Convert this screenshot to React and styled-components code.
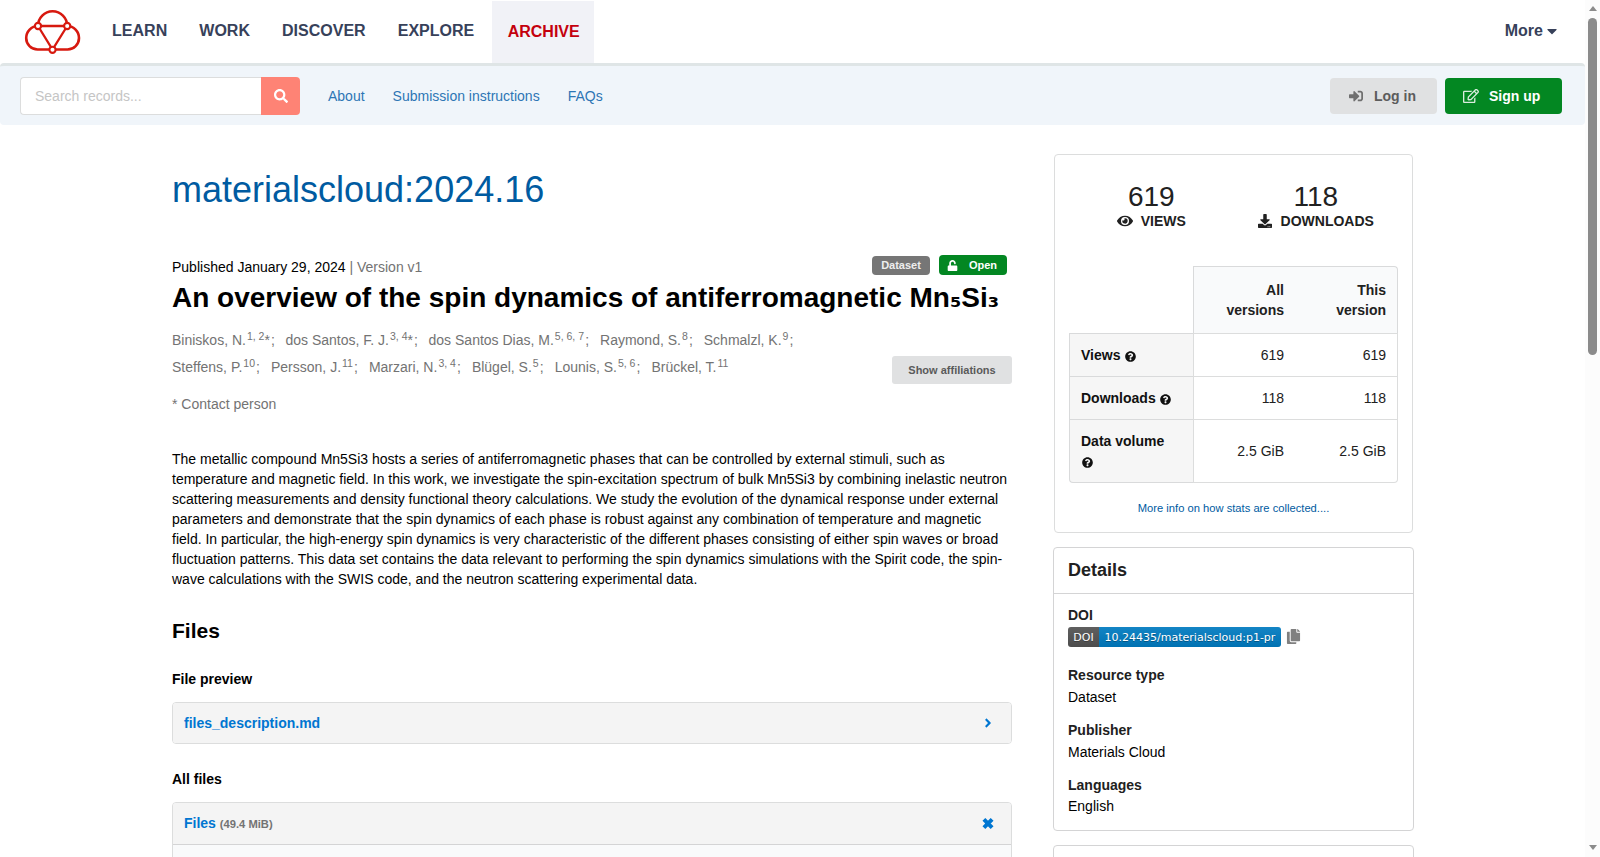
import React from "react";
import styled, { createGlobalStyle } from "styled-components";
import {
  FaSearch, FaCaretDown, FaSignInAlt, FaRegEdit, FaUnlock, FaEye,
  FaDownload, FaQuestionCircle, FaAngleRight, FaCopy,
} from "react-icons/fa";

const GlobalStyle = createGlobalStyle`
  * { box-sizing: border-box; }
  body {
    margin: 0;
    overflow: hidden;
    background: #fff;
    color: #000;
    font: 14px/20px "Liberation Sans", Arial, sans-serif;
  }
  h1, h2, h3, p, dl, dd, dt { margin: 0; }
  a { text-decoration: none; }
  svg { display: block; flex: none; }
`;

const Window = styled.div`
  display: flex;
  height: 857px;
  overflow: hidden;
`;
const Page = styled.div`
  width: 1585px;
  height: 857px;
  overflow: hidden;
`;

const TopNav = styled.nav`
  display: flex;
  align-items: stretch;
  height: 63px;
  padding: 1px 25px 0 24px;
`;
const LogoLink = styled.a`
  width: 72px;
  padding-top: 8px;
`;
const NavItem = styled.a`
  display: flex;
  align-items: center;
  padding: ${(p) => (p.$active ? "0 14.5px 0 15.5px" : "0 16px 2px")};
  margin-left: ${(p) => (p.$active ? "2px" : "0.1px")};
  font-size: 16px;
  font-weight: bold;
  color: ${(p) => (p.$active ? "#c4000d" : "#37415a")};
  background: ${(p) => (p.$active ? "#f1f2f7" : "transparent")};
`;
const MoreItem = styled.a`
  display: flex;
  align-items: center;
  gap: 1px;
  padding-bottom: 2px;
  margin-left: auto;
  font-size: 16px;
  font-weight: bold;
  color: #37415a;
`;

const SubNav = styled.div`
  display: flex;
  align-items: center;
  height: 62px;
  padding: 4px 23px 3px 20px;
  border-top: 3px solid #dfe5e6;
  border-radius: 4px;
  background: #f0f5fa;
`;
const SearchForm = styled.div`
  display: flex;
  width: 280px;
  height: 38px;
  margin-right: 28px;
`;
const SearchInput = styled.div`
  flex: 1;
  padding: 8px 14px;
  border: 1px solid #dcdddd;
  border-right: 0;
  border-radius: 4px 0 0 4px;
  background: #fff;
  color: #c5c5c5;
`;
const SearchButton = styled.button`
  display: flex;
  align-items: center;
  justify-content: center;
  width: 39px;
  padding: 0;
  border: 0;
  border-radius: 0 4px 4px 0;
  background: #fe8375;
  color: #fff;
`;
const SubLink = styled.a`
  margin-right: 28px;
  color: #2d76b5;
`;
const Actions = styled.div`
  display: flex;
  gap: 8px;
  margin-left: auto;
`;
const ActionButton = styled.button`
  display: flex;
  align-items: center;
  gap: ${(p) => (p.$primary ? "10px" : "11px")};
  width: ${(p) => (p.$primary ? 117 : 107)}px;
  height: 36px;
  padding: 0 0 0 ${(p) => (p.$primary ? 18 : 19)}px;
  border: 0;
  border-radius: 4px;
  background: ${(p) => (p.$primary ? "#038722" : "#e0e1e2")};
  color: ${(p) => (p.$primary ? "#fff" : "#5c5c5c")};
  font: bold 14px "Liberation Sans", Arial, sans-serif;
  svg { opacity: 0.85; }
`;

const Main = styled.main`
  display: flex;
  align-items: flex-start;
  padding: 29px 0 0 172px;
`;
const Record = styled.article`
  width: 840px;
  padding-top: 15px;
`;
const Community = styled.div`
  font-size: 36px;
  line-height: 41px;
  color: #005ba1;
`;
const MetaRow = styled.div`
  display: flex;
  justify-content: space-between;
  height: 20px;
  margin-top: 47px;
`;
const Muted = styled.span`
  color: #737373;
`;
const Labels = styled.div`
  display: flex;
  align-items: center;
  gap: 9px;
  height: 20px;
  margin: -2px 5px 0 0;
`;
const Label = styled.span`
  display: flex;
  align-items: center;
  gap: 10.5px;
  height: ${(p) => (p.$open ? 20 : 19)}px;
  padding: 0 ${(p) => (p.$open ? 10 : 9)}px 0 ${(p) => (p.$open ? 8.5 : 9)}px;
  border-radius: 4px;
  background: ${(p) => (p.$open ? "#038722" : "#767676")};
  color: ${(p) => (p.$open ? "#fff" : "#eeeeee")};
  font-size: 11px;
  font-weight: bold;
`;
const RecordTitle = styled.h1`
  margin-top: 3px;
  font-size: 28px;
  height: 36px;
  line-height: 36px;
  white-space: nowrap;
`;
const Subscript = styled.span`
  font-family: "DejaVu Sans", sans-serif;
  font-size: 26px;
  line-height: 0;
`;
const Creators = styled.div`
  display: flex;
  justify-content: space-between;
  align-items: flex-end;
  height: 60px;
  margin-top: 8px;
`;
const CreatorList = styled.div`
  align-self: flex-start;
  padding-top: 3px;
  color: #737373;
`;
const CreatorRow = styled.div`
  display: flex;
  gap: 11px;
  line-height: 27px;
  white-space: nowrap;
`;
const Creator = styled.span`
  margin-right: ${(p) => (p.$contact ? "-0.3px" : "0")};
`;
const Sup = styled.sup`
  position: relative;
  top: -0.5em;
  margin-left: 1px;
  margin-right: ${(p) => (p.$contact ? "0" : "1.1px")};
  font-size: 75%;
  line-height: 0;
  vertical-align: baseline;
`;
const Star = styled.span`
  margin-right: 1px;
`;
const AffiliationsButton = styled.button`
  width: 120px;
  height: 28px;
  padding: 0;
  border: 0;
  border-radius: 3px;
  background: #e0e1e2;
  color: #5a5a5a;
  font: bold 11px "Liberation Sans", Arial, sans-serif;
`;
const Contact = styled.p`
  margin-top: 10px;
  color: #737373;
`;
const Abstract = styled.p`
  margin-top: 35px;
  white-space: nowrap;
`;
const FilesHeading = styled.h2`
  margin-top: 28px;
  font-size: 21px;
  line-height: 28px;
`;
const SubHeading = styled.h3`
  margin-top: ${(p) => p.$top}px;
  font-size: 14px;
  line-height: 20px;
`;
const FilePanel = styled.div`
  margin-top: 13px;
  height: ${(p) => (p.$open ? "120px" : "42px")};
  border: 1px solid #dcdddd;
  border-radius: 4px;
  background: ${(p) => (p.$open ? "#f9fafb" : "#f4f4f4")};
  overflow: hidden;
`;
const PanelTitle = styled.div`
  display: flex;
  align-items: center;
  justify-content: space-between;
  height: ${(p) => (p.$open ? 42 : 40)}px;
  padding: 0 ${(p) => (p.$open ? 17 : 16)}px 0 11px;
  border-bottom: ${(p) => (p.$open ? "1px solid #d4d4d5" : "0")};
  background: #f4f4f4;
  color: #0076d1;
  font-weight: bold;
`;
const FileSize = styled.small`
  font-size: 11.2px;
  color: #737373;
`;

const Sidebar = styled.aside`
  width: 361px;
  margin-left: 41px;
`;
const StatsCard = styled.section`
  height: 379px;
  margin: 0 1px 0 1px;
  padding: 25px 15px 0 14px;
  border: 1px solid #dcdddd;
  border-radius: 4px;
  color: #212121;
`;
const Totals = styled.div`
  display: grid;
  grid-template-columns: 1fr 1fr;
  margin-right: -1px;
`;
const Total = styled.div`
  display: flex;
  flex-direction: column;
  align-items: center;
`;
const TotalValue = styled.div`
  font-size: 28px;
  line-height: 34px;
`;
const TotalLabel = styled.div`
  display: flex;
  align-items: center;
  gap: ${(p) => p.$gap}px;
  margin-top: -3px;
  font-weight: bold;
  line-height: 20px;
`;
const Table = styled.table`
  width: 329px;
  margin-top: 35px;
  border-collapse: separate;
  border-spacing: 0;
  table-layout: fixed;
`;
const HeadCell = styled.th`
  width: ${(p) => p.$w}px;
  height: 67px;
  padding: 0 11px;
  border-top: 1px solid #d9dadb;
  border-left: ${(p) => (p.$first ? "1px solid #d9dadb" : "0")};
  border-right: ${(p) => (p.$last ? "1px solid #d9dadb" : "0")};
  border-radius: ${(p) => (p.$last ? "0 4px 0 0" : "0")};
  background: #f9fafb;
  text-align: right;
`;
const Corner = styled.th`
  width: 124px;
`;
const RowHead = styled.th`
  height: ${(p) => p.$h}px;
  padding: 0 11px;
  border: solid #d9dadb;
  border-width: 1px 0 ${(p) => (p.$last ? "1px" : "0")} 1px;
  border-radius: ${(p) => (p.$last ? "0 0 0 4px" : "0")};
  background: #f6f6f6;
  color: #111;
  text-align: left;
  svg { display: inline-block; vertical-align: -1.5px; margin-left: 0.5px; }
`;
const Cell = styled.td`
  padding: 0 11px;
  border: solid #dcdddd;
  border-width: 1px ${(p) => (p.$end ? "1px" : "0")} ${(p) => (p.$last ? "1px" : "0")} ${(p) => (p.$end ? "0" : "1px")};
  border-radius: ${(p) => (p.$end && p.$last ? "0 0 4px 0" : "0")};
  text-align: right;
`;
const StatsLink = styled.a`
  display: block;
  margin: 15px -1px 0 0;
  text-align: center;
  font-size: 11.2px;
  color: #005ba1;
`;
const Card = styled.section`
  height: ${(p) => p.$h}px;
  margin-top: 14px;
  border: 1px solid #d4d4d5;
  border-radius: 4px;
`;
const CardTitle = styled.h2`
  height: 46px;
  padding: 0 14px;
  border-bottom: 1px solid #d4d4d5;
  font-size: 18px;
  line-height: 45px;
  color: #212121;
`;
const DetailList = styled.dl`
  padding: 11px 14px;
`;
const Term = styled.dt`
  margin-top: ${(p) => p.$top || 0}px;
  font-weight: bold;
  color: #212121;
`;
const Detail = styled.dd`
  display: flex;
  align-items: center;
  margin-top: ${(p) => p.$top}px;
`;
const DoiBadge = styled.a`
  display: flex;
  height: 20px;
  margin-right: 5px;
  border-radius: 3px;
  overflow: hidden;
  color: #fff;
  font: 11px/21px "DejaVu Sans", Verdana, sans-serif;
  text-shadow: 0 1px 0 rgba(1, 1, 1, 0.3);
`;
const BadgePart = styled.span`
  width: ${(p) => p.$w}px;
  text-align: center;
  white-space: nowrap;
  background: linear-gradient(rgba(187, 187, 187, 0.1), rgba(0, 0, 0, 0.1)), ${(p) => p.$bg};
`;
const CopyIcon = styled(FaCopy)`
  margin-bottom: 1px;
  color: #808080;
`;

const ScrollTrack = styled.div`
  display: flex;
  flex-direction: column;
  align-items: center;
  width: 15px;
  height: 857px;
  padding: 6px 0 7px;
  background: #fcfcfc;
`;
const ScrollThumb = styled.div`
  width: 9px;
  height: 337px;
  margin: 7px 0 auto;
  border-radius: 5px;
  background: #8b8b8b;
`;
const ScrollArrow = styled.i`
  border: 4.5px solid transparent;
  ${(p) => (p.$up ? "border-bottom: 5px solid #8b8b8b; border-top: 0;" : "border-top: 5px solid #8b8b8b; border-bottom: 0;")}
`;

const Logo = () => (
  <svg width="58" height="47" viewBox="0 0 58 47" fill="none" stroke="#d7190f" strokeWidth="2.6">
    <path d="M14 17A14.6 14.7 0 0 1 43.2 17" />
    <path d="M14 17A11.9 11.9 0 0 0 2.2 29A11.5 11.5 0 0 0 13.6 40.5H43.6A11.5 11.5 0 0 0 55 29A11.9 11.9 0 0 0 43.2 17" />
    <path d="M14 17H43.2L28.5 40.5Z" strokeWidth="2.3" />
    <g fill="#fff" strokeWidth="2.1">
      <circle cx="14" cy="17" r="3.1" />
      <circle cx="43.2" cy="17" r="3.1" />
      <circle cx="28.5" cy="40.8" r="3.1" />
    </g>
  </svg>
);

const Cross = () => (
  <svg width="12" height="12" viewBox="0 0 12 12" fill="none" stroke="currentColor" strokeWidth="4">
    <path d="M1.9 1.4L10.1 9.6M10.1 1.4L1.9 9.6" />
  </svg>
);

const creators = [
  [["Biniskos, N.", "1, 2", true], ["dos Santos, F. J.", "3, 4", true], ["dos Santos Dias, M.", "5, 6, 7"], ["Raymond, S.", "8"], ["Schmalzl, K.", "9"]],
  [["Steffens, P.", "10"], ["Persson, J.", "11"], ["Marzari, N.", "3, 4"], ["Blügel, S.", "5"], ["Lounis, S.", "5, 6"], ["Brückel, T.", "11", false, true]],
];

const abstract = [
  "The metallic compound Mn5Si3 hosts a series of antiferromagnetic phases that can be controlled by external stimuli, such as",
  "temperature and magnetic field. In this work, we investigate the spin-excitation spectrum of bulk Mn5Si3 by combining inelastic neutron",
  "scattering measurements and density functional theory calculations. We study the evolution of the dynamical response under external",
  "parameters and demonstrate that the spin dynamics of each phase is robust against any combination of temperature and magnetic",
  "field. In particular, the high-energy spin dynamics is very characteristic of the different phases consisting of either spin waves or broad",
  "fluctuation patterns. This data set contains the data relevant to performing the spin dynamics simulations with the Spirit code, the spin-",
  "wave calculations with the SWIS code, and the neutron scattering experimental data.",
];

const stats = [
  ["Views", "619", 43],
  ["Downloads", "118", 43],
  ["Data volume", "2.5 GiB", 64],
];

export default function App() {
  return (
    <Window>
      <GlobalStyle />
      <Page>
        <TopNav>
          <LogoLink><Logo /></LogoLink>
          <NavItem>LEARN</NavItem>
          <NavItem>WORK</NavItem>
          <NavItem>DISCOVER</NavItem>
          <NavItem>EXPLORE</NavItem>
          <NavItem $active>ARCHIVE</NavItem>
          <MoreItem>More <FaCaretDown size={16} /></MoreItem>
        </TopNav>
        <SubNav>
          <SearchForm>
            <SearchInput>Search records...</SearchInput>
            <SearchButton><FaSearch size={14} /></SearchButton>
          </SearchForm>
          <SubLink>About</SubLink>
          <SubLink>Submission instructions</SubLink>
          <SubLink>FAQs</SubLink>
          <Actions>
            <ActionButton><FaSignInAlt size={14} />Log in</ActionButton>
            <ActionButton $primary><FaRegEdit size={16} />Sign up</ActionButton>
          </Actions>
        </SubNav>
        <Main>
          <Record>
            <Community>materialscloud:2024.16</Community>
            <MetaRow>
              <div>Published January 29, 2024 <Muted>| Version v1</Muted></div>
              <Labels>
                <Label>Dataset</Label>
                <Label $open><FaUnlock size={11} />Open</Label>
              </Labels>
            </MetaRow>
            <RecordTitle>
              An overview of the spin dynamics of antiferromagnetic Mn<Subscript>₅</Subscript>Si<Subscript>₃</Subscript>
            </RecordTitle>
            <Creators>
              <CreatorList>
                {creators.map((row, i) => (
                  <CreatorRow key={i}>
                    {row.map(([name, refs, contact, last]) => (
                      <Creator key={name} $contact={contact}>
                        {name}<Sup $contact={contact}>{refs}</Sup>{contact && <Star>*</Star>}{!last && ";"}
                      </Creator>
                    ))}
                  </CreatorRow>
                ))}
              </CreatorList>
              <AffiliationsButton>Show affiliations</AffiliationsButton>
            </Creators>
            <Contact>* Contact person</Contact>
            <Abstract>
              {abstract.map((line) => <React.Fragment key={line}>{line}<br /></React.Fragment>)}
            </Abstract>
            <FilesHeading>Files</FilesHeading>
            <SubHeading $top={24}>File preview</SubHeading>
            <FilePanel>
              <PanelTitle>files_description.md<FaAngleRight size={14} /></PanelTitle>
            </FilePanel>
            <SubHeading $top={25}>All files</SubHeading>
            <FilePanel $open>
              <PanelTitle $open><span>Files <FileSize>(49.4 MiB)</FileSize></span><Cross /></PanelTitle>
            </FilePanel>
          </Record>
          <Sidebar>
            <StatsCard>
              <Totals>
                <Total>
                  <TotalValue>619</TotalValue>
                  <TotalLabel $gap={8}><FaEye size={16} />VIEWS</TotalLabel>
                </Total>
                <Total>
                  <TotalValue>118</TotalValue>
                  <TotalLabel $gap={9}><FaDownload size={14} />DOWNLOADS</TotalLabel>
                </Total>
              </Totals>
              <Table>
                <thead>
                  <tr>
                    <Corner />
                    <HeadCell $first $w={102}>All<br />versions</HeadCell>
                    <HeadCell $last $w={103}>This<br />version</HeadCell>
                  </tr>
                </thead>
                <tbody>
                  {stats.map(([name, value, h], i) => (
                    <tr key={name}>
                      <RowHead $h={h} $last={i === 2}>{name} {i === 2 && <br />}<FaQuestionCircle size={11} /></RowHead>
                      <Cell $last={i === 2}>{value}</Cell>
                      <Cell $end $last={i === 2}>{value}</Cell>
                    </tr>
                  ))}
                </tbody>
              </Table>
              <StatsLink>More info on how stats are collected....</StatsLink>
            </StatsCard>
            <Card $h={284}>
              <CardTitle>Details</CardTitle>
              <DetailList>
                <Term>DOI</Term>
                <Detail $top={2}>
                  <DoiBadge>
                    <BadgePart $w={31} $bg="#555">DOI</BadgePart>
                    <BadgePart $w={182} $bg="#007ec6">10.24435/materialscloud:p1-pr</BadgePart>
                  </DoiBadge>
                  <CopyIcon size={15} />
                </Detail>
                <Term $top={18}>Resource type</Term>
                <Detail $top={2}>Dataset</Detail>
                <Term $top={13}>Publisher</Term>
                <Detail $top={2}>Materials Cloud</Detail>
                <Term $top={13}>Languages</Term>
                <Detail $top={1}>English</Detail>
              </DetailList>
            </Card>
            <Card $h={60} />
          </Sidebar>
        </Main>
      </Page>
      <ScrollTrack>
        <ScrollArrow $up />
        <ScrollThumb />
        <ScrollArrow />
      </ScrollTrack>
    </Window>
  );
}
